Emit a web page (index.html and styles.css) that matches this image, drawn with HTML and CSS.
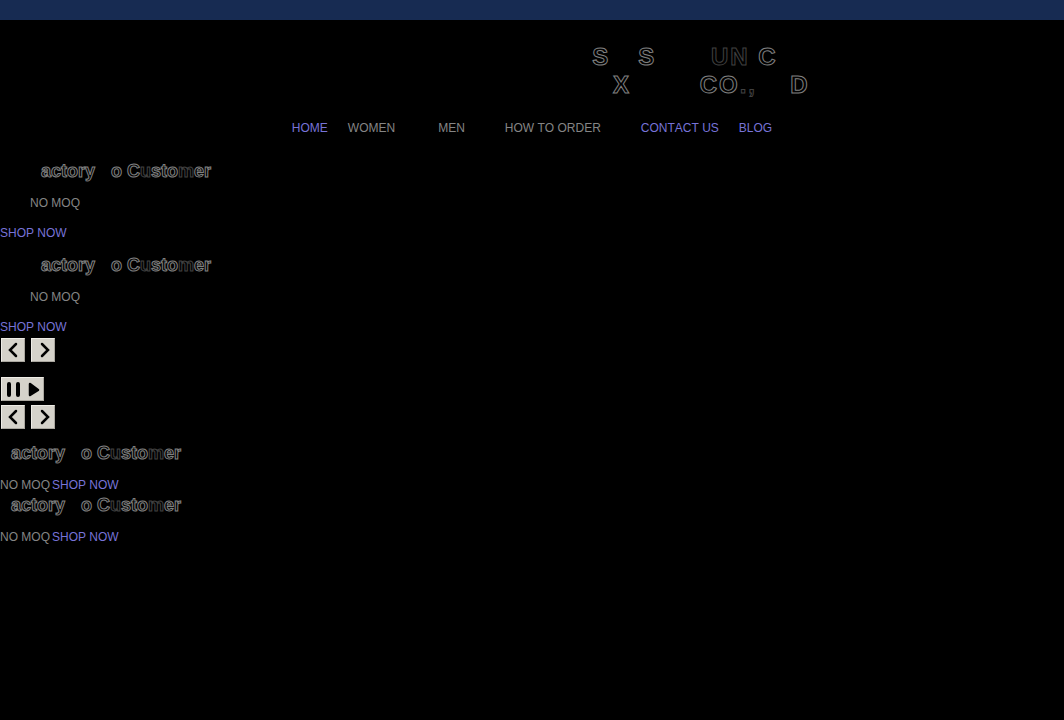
FILE: index.html
```html
<!DOCTYPE html>
<html lang="en">
<head>
    <meta charset="UTF-8">
    <title>SHISHI EUNICE TEXTILE CO.,LTD</title>
    <link rel="stylesheet" href="styles.css">
</head>
<body>
<div class="topbar"></div>
<header>
    <h1 class="outline">S<span class="dim">HI</span>S<span class="dim">HI E</span><span class="low">U</span><span class="low">N</span><span class="dim">I</span>C<span class="dim">E</span><br>
        <span class="dim">TE</span>X<span class="dim">TILE</span> CO<span class="low">.,</span><span class="dim">LT</span>D</h1>
    <nav>
        <a href="#">HOME</a>
        <span class="drop">WOMEN</span>
        <span class="drop">MEN</span>
        <span class="drop">HOW TO ORDER</span>
        <a href="#">CONTACT US</a>
        <a href="#">BLOG</a>
    </nav>
</header>

<main>
    <section class="slide">
        <h2 class="outline"><span class="dim">F</span>actory <span class="dim">T</span>o C<span class="low">u</span>sto<span class="low">m</span>er</h2>
        <p>NO MOQ</p>
        <a href="#">SHOP NOW</a>
    </section>
    <section class="slide">
        <h2 class="outline"><span class="dim">F</span>actory <span class="dim">T</span>o C<span class="low">u</span>sto<span class="low">m</span>er</h2>
        <p>NO MOQ</p>
        <a href="#">SHOP NOW</a>
    </section>

    <div class="arrows">
        <button type="button" aria-label="Previous"><svg width="20" height="20" viewBox="0 0 20 20"><path d="M13 4 7 10l6 6"/></svg></button>
        <button type="button" aria-label="Next"><svg width="20" height="20" viewBox="0 0 20 20"><path d="M9 4l6 6-6 6"/></svg></button>
    </div>
    <div class="play">
        <button type="button" aria-label="Pause or play"><svg width="39" height="20" viewBox="0 0 39 20"><path class="bars" d="M6 5v11M15 5v11"/><path class="tri" d="M27 5l8 6-8 5z"/></svg></button>
    </div>
    <div class="arrows">
        <button type="button" aria-label="Previous"><svg width="20" height="20" viewBox="0 0 20 20"><path d="M13 4 7 10l6 6"/></svg></button>
        <button type="button" aria-label="Next"><svg width="20" height="20" viewBox="0 0 20 20"><path d="M9 4l6 6-6 6"/></svg></button>
    </div>

    <div class="list">
        <section class="item">
            <h2 class="outline"><span class="dim">F</span>actory <span class="dim">T</span>o C<span class="low">u</span>sto<span class="low">m</span>er</h2>
            <p>NO MOQ</p><a href="#">SHOP NOW</a>
        </section>
        <section class="item">
            <h2 class="outline"><span class="dim">F</span>actory <span class="dim">T</span>o C<span class="low">u</span>sto<span class="low">m</span>er</h2>
            <p>NO MOQ</p><a href="#">SHOP NOW</a>
        </section>
    </div>
</main>
</body>
</html>
```
FILE: styles.css
```css
*{
    margin: 0;
    padding: 0;
    box-sizing: border-box;
}
body{
    background: #000;
    color: #858585;
    font: 12px/14px "Liberation Sans", Arial, sans-serif;
    font-kerning: none;
}
a{
    color: #7773d8;
    text-decoration: none;
}
.topbar{
    height: 20px;
    background: #172b52;
}
h1{
    margin-top: 23px;
    padding-left: 324px;
    font-size: 24px;
    line-height: 28px;
    letter-spacing: 2px;
    text-align: center;
}
h2{
    font-size: 18px;
    line-height: 22px;
}
/* black letters with a thin edge */
.outline{
    color: #000;
    -webkit-text-stroke: 1px #808080;
}
.outline .dim{
    -webkit-text-stroke-color: #000;
}
.outline .low{
    -webkit-text-stroke-color: #404040;
}
nav{
    display: flex;
    justify-content: center;
    gap: 20px;
    margin-top: 22px;
}
.drop{
    padding-right: 20px;
}
.drop:first-of-type{
    padding-right: 23px;
}
main{
    padding-top: 25px;
}
.slide{
    margin-bottom: 14px;
}
.slide h2, .slide p{
    padding-left: 30px;
}
.slide p{
    margin: 14px 0 16px;
}
.slide a{
    display: block;
}
.slide + .arrows{
    margin-top: -10px;
}
.arrows{
    display: flex;
    gap: 6px;
    padding-left: 1px;
}
.play{
    padding: 15px 0 4px 1px;
}
button{
    display: block;
    padding: 1px;
    border: 1px solid;
    border-color: #eeece6 #aaa79f #aaa79f #eeece6;
    background: #d5d2ca;
}
svg{
    display: block;
    fill: none;
    stroke: #000;
    stroke-width: 2.5;
    stroke-linecap: round;
}
.bars{
    stroke-width: 4;
}
.tri{
    fill: #000;
    stroke-linejoin: round;
}
.list{
    padding-top: 13px;
}
.item{
    display: flex;
    flex-wrap: wrap;
    column-gap: 2px;
    margin-bottom: 2px;
}
.item h2{
    width: 100%;
    margin-bottom: 14px;
}
```
